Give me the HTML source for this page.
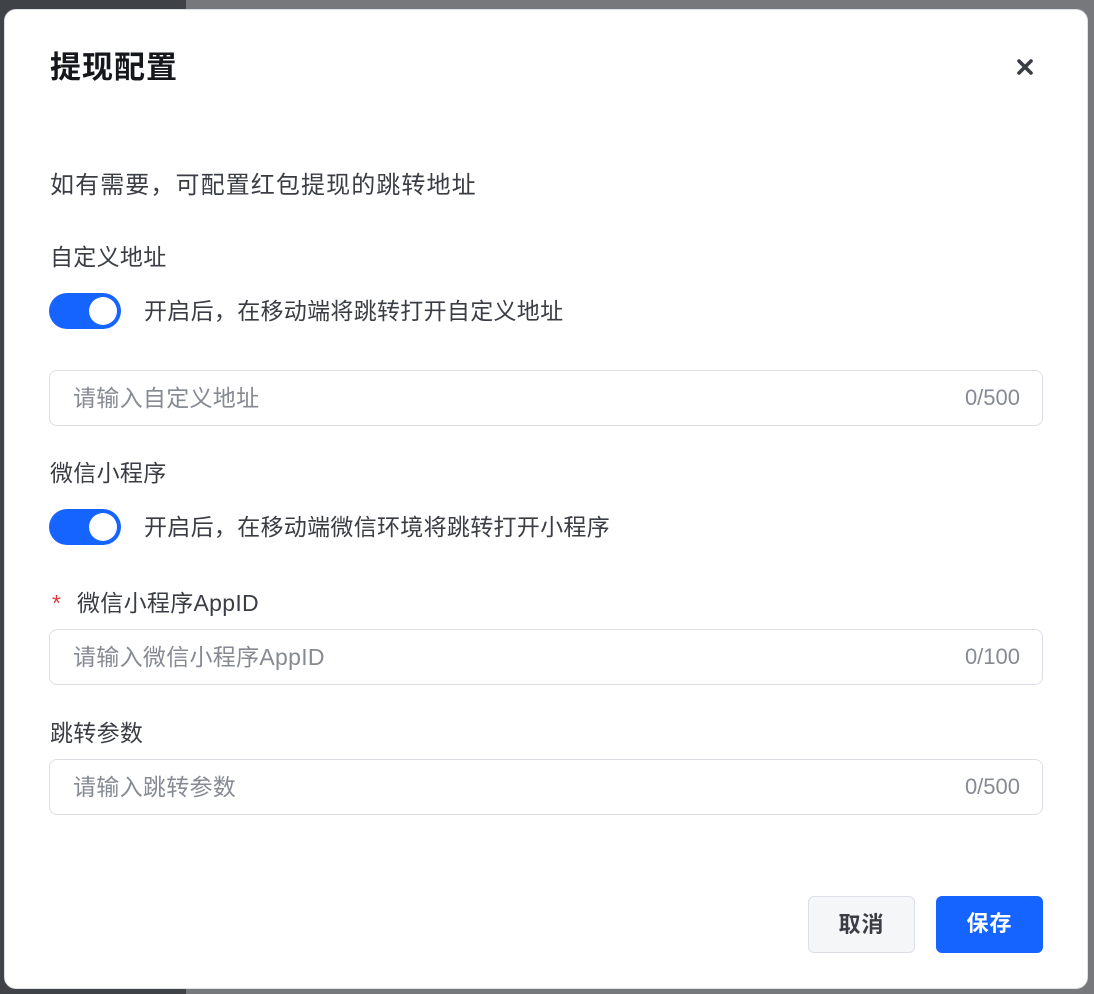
<!DOCTYPE html>
<html><head><meta charset="utf-8"><style>
*{margin:0;padding:0;box-sizing:border-box}
body{width:1094px;height:994px;position:relative;overflow:hidden;background:#76787c;font-family:"Liberation Sans","Noto Sans CJK SC",sans-serif;}
.dark{position:absolute;left:0;top:0;width:186px;height:994px;background:#3f4247}
.dlg{position:absolute;left:4px;top:9px;width:1084px;height:980px;background:#fff;border-radius:12px;border:1px solid #dde1e8}
.a{position:absolute;white-space:nowrap}
.t{font-size:23px;letter-spacing:0.3px;color:#3a3d44;line-height:26px}
.title{font-size:31px;letter-spacing:1px;font-weight:bold;color:#15171b;line-height:36px}
.tg{position:absolute;width:72px;height:36px;border-radius:18px;background:#1664ff}
.tg::after{content:"";position:absolute;right:4px;top:4px;width:28px;height:28px;border-radius:50%;background:#fff}
.in{position:absolute;left:49px;width:994px;height:56px;border:1px solid #dcdfe5;border-radius:8px}
.in span{position:absolute;top:14px;font-size:22px;line-height:26px;color:#868a93}
.ph{left:23px;font-size:23px!important;letter-spacing:0.3px}.ct{right:22px}
.btn{position:absolute;top:896px;height:57px;border-radius:6px;font-size:22px;font-weight:bold;text-align:center;line-height:55px;letter-spacing:1px}
</style></head><body>
<div class="dark"></div>
<div class="dlg"></div>
<div class="a title" style="left:50px;top:50px">提现配置</div>
<svg class="a" style="left:1016px;top:58px" width="18" height="18" viewBox="0 0 18 18"><path d="M3 3L15 15M15 3L3 15" stroke="#3a3d44" stroke-width="3.6" stroke-linecap="round"/></svg>
<div class="a t" style="left:50px;top:173px;font-size:24px;letter-spacing:1.1px">如有需要，可配置红包提现的跳转地址</div>
<div class="a t" style="left:50px;top:244px">自定义地址</div>
<div class="tg" style="left:49px;top:293px"></div>
<div class="a t" style="left:144px;top:298px">开启后，在移动端将跳转打开自定义地址</div>
<div class="in" style="top:370px"><span class="ph">请输入自定义地址</span><span class="ct">0/500</span></div>
<div class="a t" style="left:50px;top:460px">微信小程序</div>
<div class="tg" style="left:49px;top:509px"></div>
<div class="a t" style="left:144px;top:514px">开启后，在移动端微信环境将跳转打开小程序</div>
<div class="a t" style="left:52px;top:590px"><span style="color:#e03b3b">*</span></div>
<div class="a t" style="left:77px;top:590px">微信小程序AppID</div>
<div class="in" style="top:629px"><span class="ph">请输入微信小程序AppID</span><span class="ct">0/100</span></div>
<div class="a t" style="left:50px;top:720px">跳转参数</div>
<div class="in" style="top:759px"><span class="ph">请输入跳转参数</span><span class="ct">0/500</span></div>
<div class="btn" style="left:808px;width:107px;background:#f5f6f8;border:1px solid #dcdfe5;color:#3a3d44">取消</div>
<div class="btn" style="left:936px;width:107px;background:#1664ff;color:#fff">保存</div>
</body></html>
